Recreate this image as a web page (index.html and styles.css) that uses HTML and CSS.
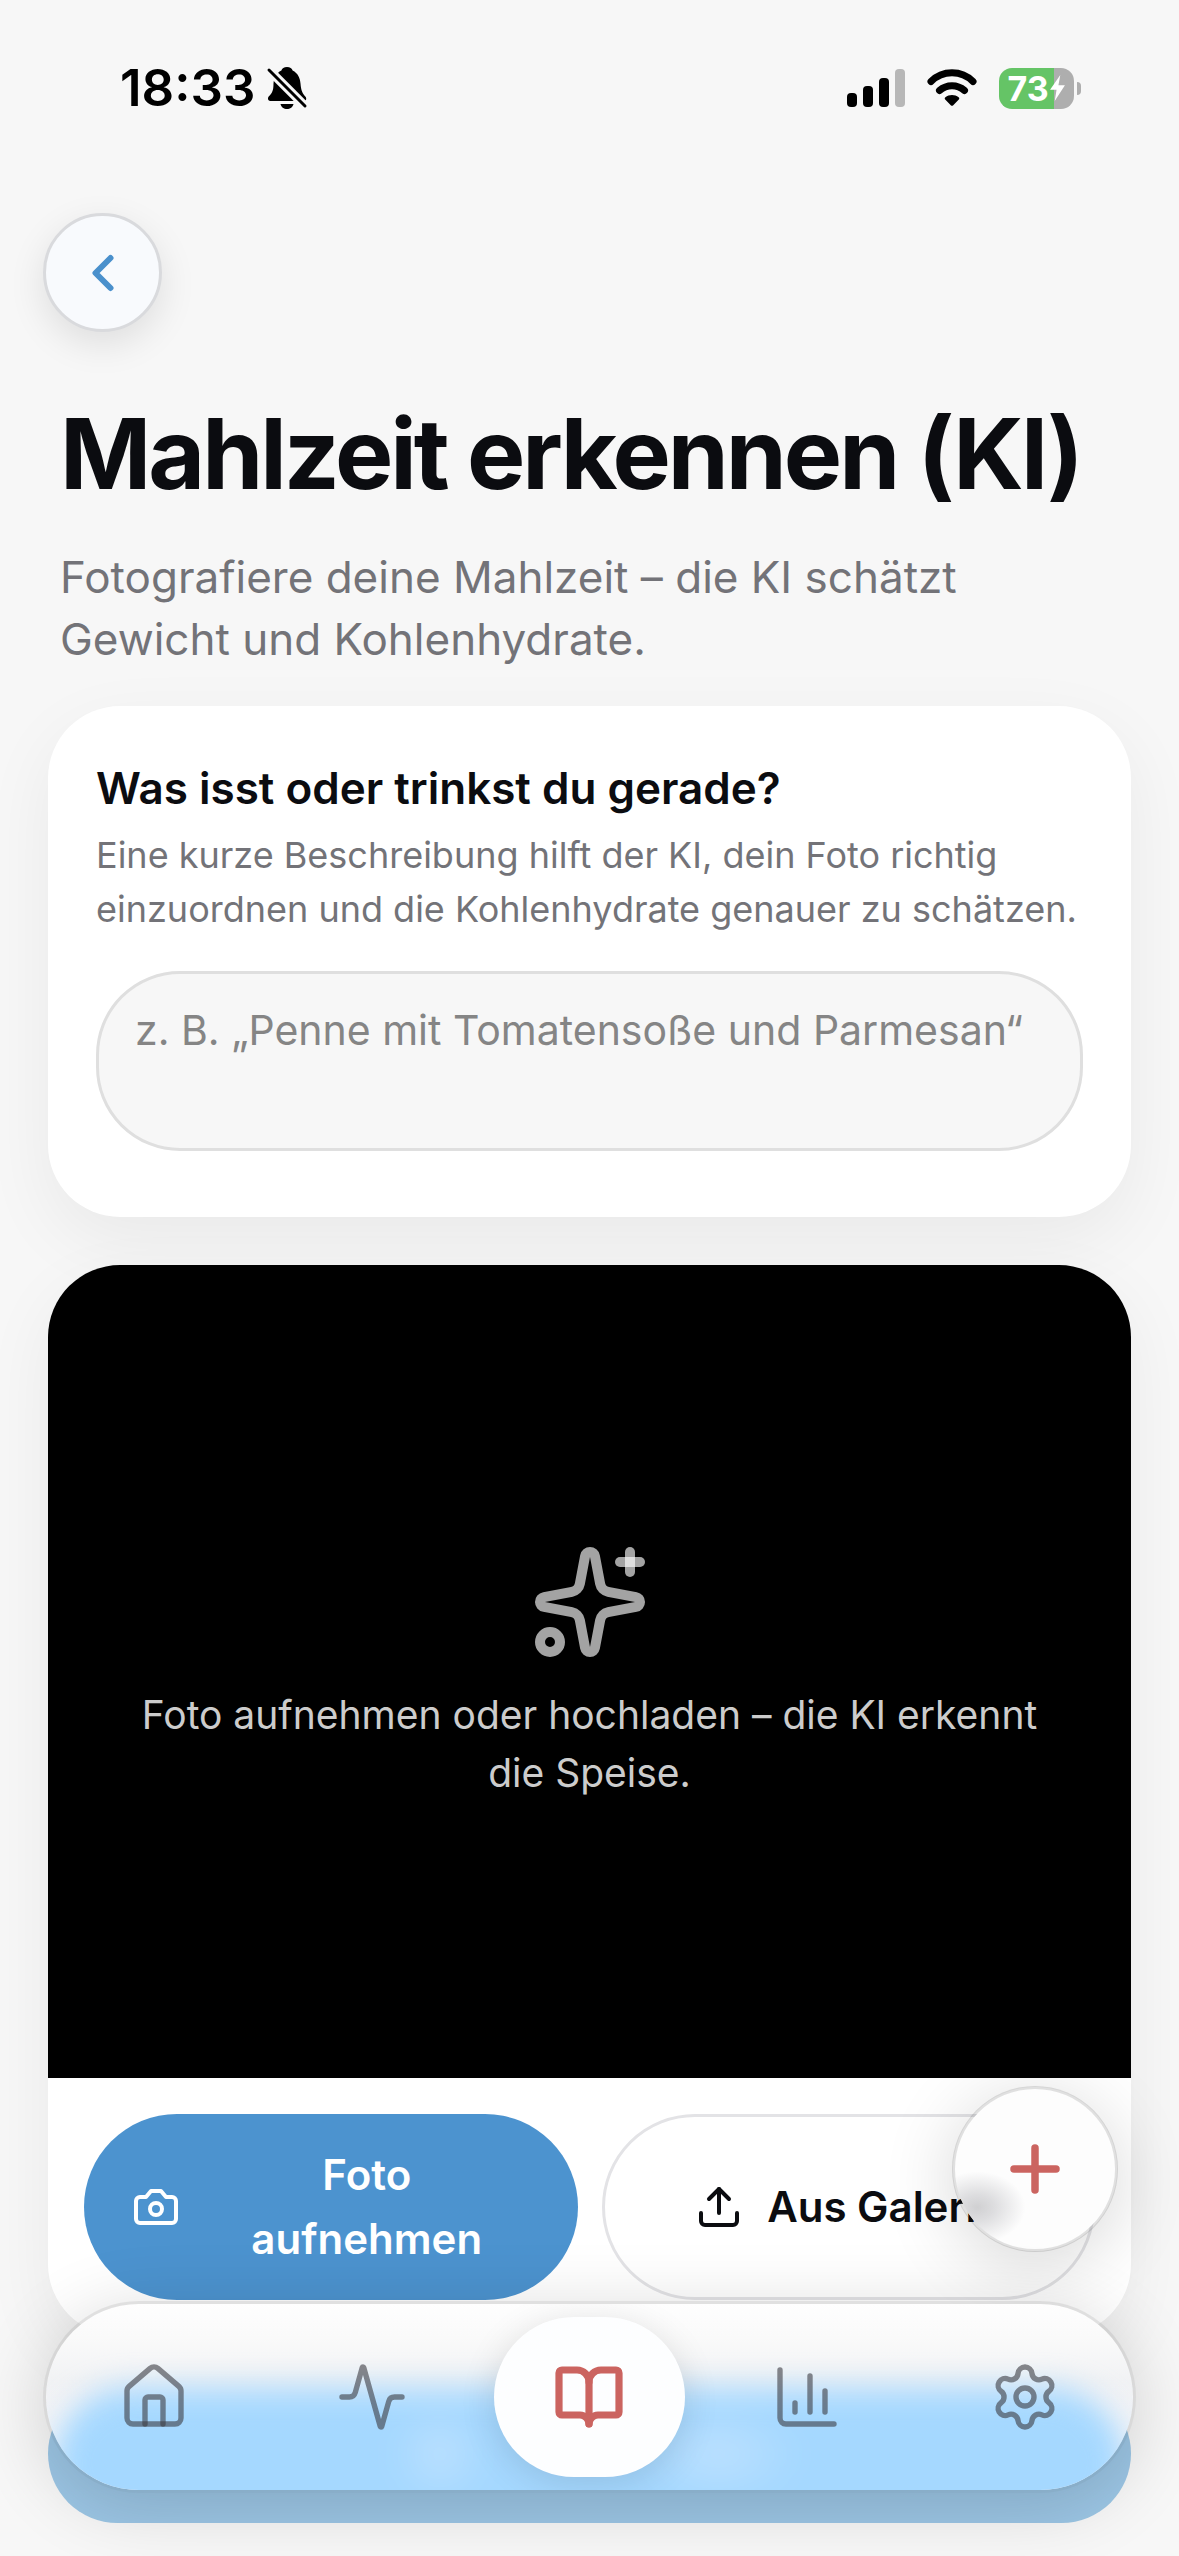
FILE: index.html
```html
<!DOCTYPE html>
<html lang="de">
<head>
<meta charset="utf-8">
<meta name="viewport" content="width=device-width, initial-scale=1">
<title>Mahlzeit erkennen (KI)</title>
<link rel="stylesheet" href="styles.css">
</head>
<body>
<div class="screen">
  <header class="status">
    <div class="status-left">
      <span class="clock">18:33</span>
      <svg class="bell" viewBox="0 0 42 42" aria-hidden="true">
        <path fill="#000" d="M21 0c3 0 5 1.400 5.600 3.400C32 6.100 34 10.800 34.500 16.500c.5 7 2 10 5 13.300 1.300 1.500.8 4.200-1.200 4.200H4.200C2.200 34 1.300 31.500 2.500 29.800 6 26 7.500 24 7.500 16.500 8 10.800 10 6.100 15.400 3.400 16 1.400 18 0 21 0zM14.500 37h13c-.5 3-3.500 5-6.500 5s-6-2-6.500-5z"/>
        <path d="M0 0l42 42" stroke="#f7f7f7" stroke-width="9"/>
        <path d="M3 3l36 36" stroke="#000" stroke-width="3" stroke-linecap="round"/>
      </svg>
    </div>
    <div class="status-right">
      <svg class="signal" viewBox="0 0 58 38" aria-hidden="true">
        <rect x="0" y="24" width="10" height="14" rx="4"/>
        <rect x="16" y="17" width="10" height="21" rx="4"/>
        <rect x="32" y="9" width="10" height="29" rx="4"/>
        <rect x="48" y="0" width="10" height="38" rx="4" fill="#b7b7b7"/>
      </svg>
      <svg class="wifi" viewBox="0 0 50 38" aria-hidden="true">
        <g fill="none" stroke="#000" stroke-width="7" stroke-linecap="round">
          <path d="M4 12.500C9.500 7 17 3.800 25 3.800S40.500 7 46 12.500"/>
          <path d="M12.500 21.500C16 18.500 20.300 16.800 25 16.800s9 1.700 12.500 4.700"/>
        </g>
        <path d="M25 26c2.400 0 4.800.8 6.600 2.200.8.600.9 1.500.2 2.200l-5.800 6c-.6.600-1.400.6-2 0l-5.800-6c-.7-.7-.6-1.600.2-2.200C20.200 26.800 22.600 26 25 26z"/>
      </svg>
      <div class="battery">
        <span>73</span>
        <svg viewBox="0 0 18 28" aria-hidden="true"><path d="M12 0L1 16h7L6 28 17 11h-7z" fill="#fff"/></svg>
      </div>
    </div>
  </header>

  <main class="content">
    <button class="back" type="button" aria-label="Zurück">
      <svg class="i60" viewBox="0 0 24 24" stroke-width="2.400"><path d="m15 18-6-6 6-6"/></svg>
    </button>
    <div class="intro">
      <h1>Mahlzeit erkennen (KI)</h1>
      <p>Fotografiere deine Mahlzeit – die KI schätzt Gewicht und Kohlenhydrate.</p>
    </div>

    <section class="card describe">
      <label for="meal">Was isst oder trinkst du gerade?</label>
      <p id="hint">Eine kurze Beschreibung hilft der KI, dein Foto richtig einzuordnen und die Kohlenhydrate genauer zu schätzen.</p>
      <textarea id="meal" aria-describedby="hint" placeholder="z. B. „Penne mit Tomatensoße und Parmesan“"></textarea>
    </section>

    <section class="card photo">
      <div class="preview">
        <svg class="i120" viewBox="0 0 24 24" stroke-width="2">
          <path d="M11.017 2.814a1 1 0 0 1 1.966 0l1.051 5.558a2 2 0 0 0 1.594 1.594l5.558 1.051a1 1 0 0 1 0 1.966l-5.558 1.051a2 2 0 0 0-1.594 1.594l-1.051 5.558a1 1 0 0 1-1.966 0l-1.051-5.558a2 2 0 0 0-1.594-1.594l-5.558-1.051a1 1 0 0 1 0-1.966l5.558-1.051a2 2 0 0 0 1.594-1.594z"/>
          <path d="M20 2v4"/><path d="M22 4h-4"/><circle cx="4" cy="20" r="2"/>
        </svg>
        <p>Foto aufnehmen oder hochladen – die KI erkennt die Speise.</p>
      </div>
      <div class="actions">
        <button class="btn primary" type="button">
          <svg class="i48" viewBox="0 0 24 24" stroke-width="2"><path d="M14.500 4h-5L7 7H4a2 2 0 0 0-2 2v9a2 2 0 0 0 2 2h16a2 2 0 0 0 2-2V9a2 2 0 0 0-2-2h-3l-2.500-3z"/><circle cx="12" cy="13" r="3"/></svg>
          <span>Foto aufnehmen</span>
        </button>
        <button class="btn outline" type="button">
          <svg class="i48" viewBox="0 0 24 24" stroke-width="2"><path d="M21 15v4a2 2 0 0 1-2 2H5a2 2 0 0 1-2-2v-4"/><path d="m17 8-5-5-5 5"/><path d="M12 3v12"/></svg>
          <span>Aus Galerie</span>
        </button>
      </div>
    </section>

    <button class="analyse" type="button" aria-label="Analysieren" disabled></button>
  </main>
</div>

<button class="fab" type="button" aria-label="Hinzufügen">
  <svg class="i72" viewBox="0 0 24 24" stroke-width="2.500"><path d="M5 12h14M12 5v14"/></svg>
</button>

<nav class="tabs" aria-label="Hauptnavigation">
  <a href="#start" aria-label="Start"><svg class="i72" viewBox="0 0 24 24" stroke-width="1.800"><path d="M15 21v-8a1 1 0 0 0-1-1h-4a1 1 0 0 0-1 1v8"/><path d="M3 10a2 2 0 0 1 .709-1.528l7-5.999a2 2 0 0 1 2.582 0l7 5.999A2 2 0 0 1 21 10v9a2 2 0 0 1-2 2H5a2 2 0 0 1-2-2z"/></svg></a>
  <a href="#verlauf" aria-label="Verlauf"><svg class="i72" viewBox="0 0 24 24" stroke-width="1.800"><path d="M22 12h-2.480a2 2 0 0 0-1.930 1.460l-2.350 8.360a.25.25 0 0 1-.48 0L9.240 2.180a.25.25 0 0 0-.48 0l-2.350 8.360A2 2 0 0 1 4.490 12H2"/></svg></a>
  <a class="active" href="#tagebuch" aria-label="Tagebuch" aria-current="page"><svg class="i72" viewBox="0 0 24 24" stroke-width="2.400"><path d="M12 7v14"/><path d="M3 18a1 1 0 0 1-1-1V4a1 1 0 0 1 1-1h5a4 4 0 0 1 4 4 4 4 0 0 1 4-4h5a1 1 0 0 1 1 1v13a1 1 0 0 1-1 1h-6a3 3 0 0 0-3 3 3 3 0 0 0-3-3z"/></svg></a>
  <a href="#statistik" aria-label="Statistik"><svg class="i72" viewBox="0 0 24 24" stroke-width="1.800"><path d="M3 3v16a2 2 0 0 0 2 2h16"/><path d="M18 17v-7"/><path d="M13 17V5"/><path d="M8 17v-3"/></svg></a>
  <a href="#einstellungen" aria-label="Einstellungen"><svg class="i72" viewBox="0 0 24 24" stroke-width="1.800"><path d="M9.671 4.136a2.340 2.340 0 0 1 4.659 0 2.340 2.340 0 0 0 3.319 1.915 2.340 2.340 0 0 1 2.330 4.033 2.340 2.340 0 0 0 0 3.831 2.340 2.340 0 0 1-2.330 4.033 2.340 2.340 0 0 0-3.319 1.915 2.340 2.340 0 0 1-4.659 0 2.340 2.340 0 0 0-3.320-1.915 2.340 2.340 0 0 1-2.330-4.033 2.340 2.340 0 0 0 0-3.831A2.340 2.340 0 0 1 6.350 6.051a2.340 2.340 0 0 0 3.319-1.915"/><circle cx="12" cy="12" r="3"/></svg></a>
</nav>
</body>
</html>
```
FILE: styles.css
```css
* { box-sizing: border-box; }

body {
  margin: 0;
  background: #f7f7f7;
  color: #0b0c10;
  font-family: Inter, "Liberation Sans", sans-serif;
}

button { font: inherit; color: inherit; border: 0; cursor: pointer; }
h1, p { margin: 0; }

svg { display: block; flex: none; }
.i48, .i60, .i72, .i120 {
  fill: none;
  stroke: currentColor;
  stroke-linecap: round;
  stroke-linejoin: round;
}
.i48 { width: 48px; height: 48px; }
.i60 { width: 60px; height: 60px; }
.i72 { width: 72px; height: 72px; }
.i120 { width: 120px; height: 120px; }

/* Status bar */
.status {
  display: flex;
  align-items: center;
  justify-content: space-between;
  height: 176px;
  padding: 0 98px 0 120px;
}
.status-left, .status-right { display: flex; align-items: center; }
.status-left { gap: 11px; }
.status-right { gap: 22px; }
.clock { font-size: 51px; font-weight: 600; line-height: 60px; color: #000; }
.bell { width: 42px; height: 42px; }
.signal { width: 58px; height: 38px; }
.wifi { width: 50px; height: 38px; }
.battery {
  position: relative;
  display: flex;
  align-items: center;
  justify-content: center;
  width: 75px;
  height: 41px;
  margin-right: 7px;
  border-radius: 13px;
  background: linear-gradient(90deg, #65c466 73%, #aeaeae 73%);
  color: #fff;
  font-size: 34px;
  font-weight: 700;
}
.battery svg { width: 17px; height: 26px; }
.battery::after {
  content: "";
  position: absolute;
  left: 78px;
  top: 14px;
  width: 4px;
  height: 13px;
  border-radius: 0 4px 4px 0;
  background: #aeaeae;
}

/* Page content */
.content { padding: 37px 48px 32px; }
.back {
  display: grid;
  place-items: center;
  width: 119px;
  height: 119px;
  margin-left: -5px;
  padding: 0;
  border: 3px solid #d9dadd;
  border-radius: 50%;
  background: #f8fafd;
  color: #4a90cc;
  box-shadow: 0 12px 36px rgba(0, 0, 0, .1);
}
.intro { padding: 62px 12px 0; }
h1 {
  font-size: 98px;
  font-weight: 700;
  line-height: 120px;
  letter-spacing: -3px;
}
.intro p {
  margin-top: 32px;
  color: #737378;
  font-size: 44px;
  line-height: 62px;
}
.card {
  border-radius: 72px;
  background: #fff;
  box-shadow: 0 24px 72px rgba(0, 0, 0, .06);
}
.describe { margin-top: 36px; padding: 54px 48px 66px; }
.describe label {
  display: block;
  font-size: 44px;
  font-weight: 600;
  line-height: 56px;
}
.describe p {
  margin-top: 12px;
  color: #737378;
  font-size: 36px;
  line-height: 54px;
}
textarea {
  display: block;
  width: 100%;
  height: 180px;
  margin-top: 35px;
  padding: 26px 36px;
  border: 3px solid #dfdfdf;
  border-radius: 84px;
  background: #f7f7f7;
  color: inherit;
  font: inherit;
  font-size: 41px;
  line-height: 60px;
  resize: none;
  overflow: hidden;
}
textarea::placeholder { color: #858585; opacity: 1; }

.photo { margin-top: 48px; }
.preview {
  display: flex;
  flex-direction: column;
  align-items: center;
  justify-content: center;
  gap: 24px;
  min-height: 813px;
  padding: 48px 72px;
  border-radius: 72px 72px 0 0;
  background: #000;
  color: rgba(255, 255, 255, .64);
  text-align: center;
}
.preview p { color: #ccc; font-size: 39px; line-height: 58px; }
.actions {
  display: grid;
  grid-template-columns: 1fr 1fr;
  gap: 24px;
  padding: 36px;
}
.btn {
  display: flex;
  align-items: center;
  justify-content: center;
  gap: 24px;
  min-height: 186px;
  padding: 28px 48px;
  border-radius: 93px;
  font-size: 42px;
  font-weight: 600;
  line-height: 64px;
}
.primary { background: #4c93cf; color: #fff; }
.primary span { flex: 1; }
.outline { border: 3px solid #e3e3e6; background: #fff; }
.analyse {
  display: block;
  width: 100%;
  height: 139px;
  margin-top: 48px;
  border-radius: 72px;
  background: #5fa5d8;
  opacity: .6;
}

/* Floating controls */
.fab, .tabs {
  position: fixed;
  border: 3px solid rgba(0, 0, 0, .12);
  background-clip: padding-box;
  box-shadow: 0 12px 72px rgba(0, 0, 0, .16);
}
.fab {
  right: 61px;
  bottom: 304px;
  display: grid;
  place-items: center;
  width: 166px;
  height: 166px;
  padding: 0;
  border-radius: 50%;
  background: radial-gradient(ellipse 48px 36px at 14% 74%, #d0d0d2 0, #dddddf 35%, rgba(253, 253, 253, 0) 100%) padding-box, #fdfdfd padding-box;
  color: #cb6460;
}
.tabs {
  left: 43px;
  right: 43px;
  bottom: 63px;
  display: flex;
  gap: 26px;
  padding: 13px 12px;
  border-radius: 96px;
  background: linear-gradient(#fefefe, #fafafa 18%, #f1f2f4 42%, #f4f6fc 100%) padding-box;
  overflow: hidden;
}
/* Frosted tint of the disabled button that lies under the bar */
.tabs::before {
  content: "";
  position: absolute;
  inset: 84px 9px -48px;
  border-radius: 90px;
  background:
    radial-gradient(circle 48px at 36% 66px, #bde1ff, rgba(189, 225, 255, 0)),
    radial-gradient(ellipse 84px 48px at 62% 66px, #bde1ff, rgba(189, 225, 255, 0)),
    #a5d8ff;
  filter: blur(15px);
}
.tabs a {
  position: relative;
  display: grid;
  flex: 1;
  place-items: center;
  height: 160px;
  border-radius: 80px;
  color: rgba(60, 60, 67, .6);
}
.tabs .active {
  background: #fdfeff;
  color: #cb6460;
  box-shadow: 0 6px 36px rgba(0, 0, 0, .12);
}
```
